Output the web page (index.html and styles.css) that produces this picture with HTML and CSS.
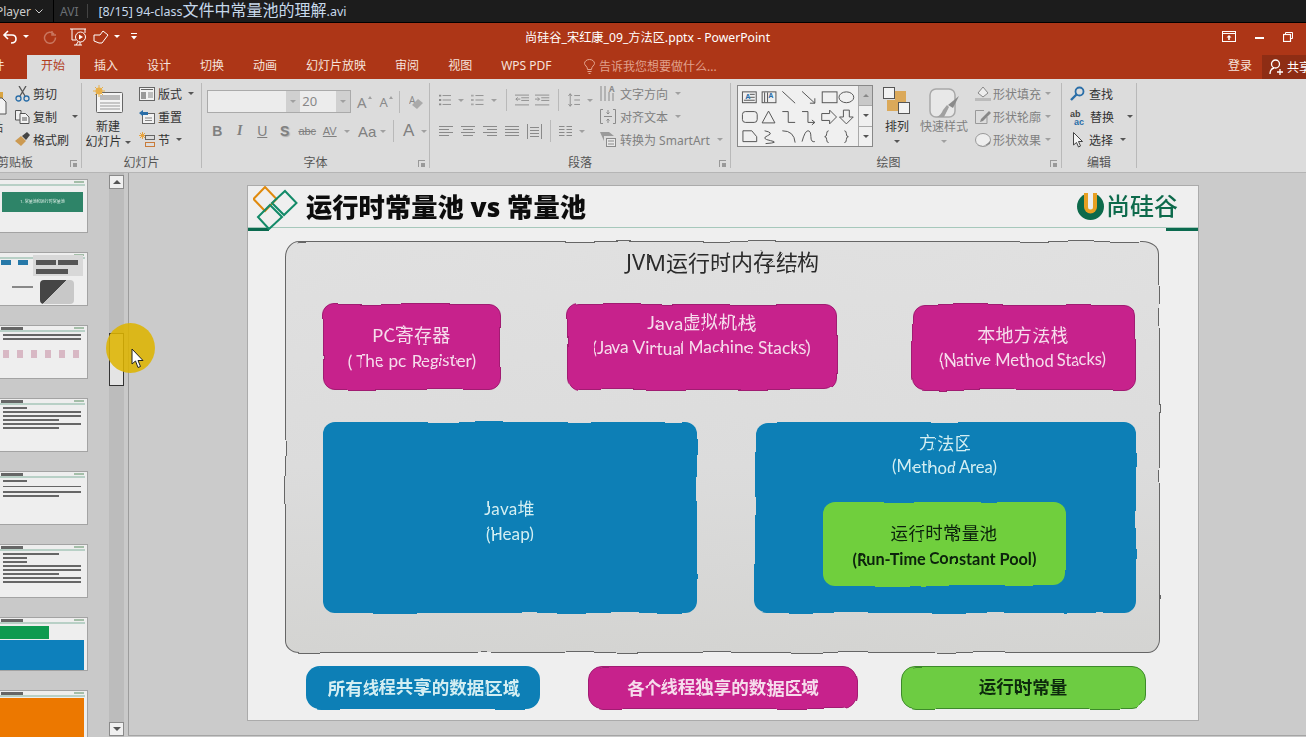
FILE: index.html
```html
<!DOCTYPE html>
<html lang="zh-CN">
<head>
    <meta charset="UTF-8">
    <title>尚硅谷_宋红康_09_方法区.pptx - PowerPoint</title>
    <link rel="stylesheet" href="styles.css">
</head>
<body>
    <!-- filter for the hand drawn edges on the slide -->
    <svg class="defs" width="0" height="0">
        <filter id="wobble" x="-3%" y="-3%" width="106%" height="106%">
            <feTurbulence type="fractalNoise" baseFrequency="0.022" numOctaves="1" seed="4"/>
            <feDisplacementMap in="SourceGraphic" scale="5"/>
            <feGaussianBlur stdDeviation="0.4"/>
        </filter>
        <filter id="soft"><feGaussianBlur stdDeviation="0.4"/></filter>
        <filter id="softer"><feGaussianBlur stdDeviation="0.55"/></filter>
    </svg>

    <div class="player-bar">
        <span class="player-name">Player</span>
        <svg class="player-chevron" width="8" height="5" viewBox="0 0 8 5"><path d="M0.5 0.5 4 4 7.5 0.5" fill="none" stroke="#ccc"/></svg>
        <span class="player-format">AVI</span>
        <span class="player-title">[8/15] 94-class<span class="player-cjk">文件中常量池的理解</span>.avi</span>
    </div>

    <div class="title-bar">
        <div class="quick-access">
            <svg class="qa-undo" width="15" height="14" viewBox="0 0 15 14"><path d="M6 1 2 5 6 9M2 5H10Q14 5 14 9T9 13" fill="none" stroke="#fff" stroke-width="1.6"/></svg>
            <span class="caret caret-white qa-caret"></span>
            <svg class="qa-redo" width="14" height="14" viewBox="0 0 14 14"><path d="M11 4A5.5 5.5 0 1 0 12.5 7.5M9 1V5H13" fill="none" stroke="#c9765f" stroke-width="1.5"/></svg>
            <svg class="qa-present" width="17" height="18" viewBox="0 0 17 18"><path d="M0 1H16M2 1V12H6M15 1V5" fill="none" stroke="#fff"/><circle cx="10.5" cy="9" r="5" fill="none" stroke="#fff"/><path d="M9 6.5 13 9 9 11.5Z" fill="#fff"/><path d="M8 14 6 17M10 14V17M4 17H12" stroke="#fff" fill="none"/></svg>
            <svg class="qa-touch" width="17" height="16" viewBox="0 0 17 16"><path d="M1 6H7L10 2 15 6 9 14H6L1 12Z" fill="none" stroke="#fff"/></svg>
            <span class="caret caret-white"></span>
            <svg class="qa-more" width="6" height="7" viewBox="0 0 6 7"><path d="M0 .5H6" stroke="#fff"/><path d="M0 3 3 6.5 6 3Z" fill="#fff"/></svg>
        </div>
        <div class="doc-title">尚硅谷_宋红康_09_方法区.pptx - PowerPoint</div>
        <div class="window-btns">
            <svg width="14" height="11" viewBox="0 0 14 11"><rect x=".5" y=".5" width="13" height="10" fill="none" stroke="#fff"/><path d="M.5 2.5H13.5" stroke="#fff"/><path d="M7 4 4.5 6.5H6.2V9H7.8V6.5H9.5Z" fill="#fff"/></svg>
            <svg width="9" height="9" viewBox="0 0 9 9"><path d="M0 6H9" stroke="#fff" stroke-width="2"/></svg>
            <svg width="10" height="10" viewBox="0 0 10 10"><path d="M2.5 2.5V.5H9.5V6.5H7.5" fill="none" stroke="#fff"/><rect x=".5" y="2.5" width="7" height="7" fill="none" stroke="#fff" stroke-width="1.2"/></svg>
        </div>
    </div>

    <div class="tab-bar">
        <span class="tab tab-file">文件</span>
        <span class="tab tab-active">开始</span>
        <span class="tab">插入</span>
        <span class="tab">设计</span>
        <span class="tab">切换</span>
        <span class="tab">动画</span>
        <span class="tab">幻灯片放映</span>
        <span class="tab">审阅</span>
        <span class="tab">视图</span>
        <span class="tab">WPS PDF</span>
        <span class="tell-me">
            <svg width="11" height="15" viewBox="0 0 11 15"><path d="M3.5 10.5Q3.5 8.500 2 7 .5 5.500 .5 4.500A5 4 0 0 1 10.500 4.500Q10.500 5.500 9 7 7.500 8.500 7.500 10.500ZM3.500 12.500H7.500M4.500 14.500H6.500" fill="none" stroke="#e3a48f"/></svg>
            告诉我您想要做什么...
        </span>
        <span class="login">登录</span>
        <span class="share">
            <svg width="15" height="16" viewBox="0 0 15 16"><circle cx="6.500" cy="5" r="4" fill="none" stroke="#fff" stroke-width="1.300"/><path d="M1 15Q1 10 5 9M11 10V16M8 13H14" fill="none" stroke="#fff" stroke-width="1.300"/></svg>
            共享
        </span>
    </div>

    <div class="ribbon">
        <!-- clipboard -->
        <div class="group group-clipboard">
            <div class="group-body">
                <div class="paste">
                    <svg width="7" height="24" viewBox="0 0 7 24"><path d="M0 0H3V6H0Z" fill="#d9a441"/><path d="M0 6H2L6 10V22H0" fill="#f3f3f3" stroke="#555"/></svg>
                    <span class="paste-label">粘贴</span>
                </div>
                <div class="stack stack-clipboard">
                    <div class="item"><svg width="15" height="16" viewBox="0 0 15 16"><path d="M4 0 10 10M11 0 5 10" stroke="#555" stroke-width="1.300"/><circle cx="3.500" cy="12.500" r="2.500" fill="none" stroke="#2a6ea8" stroke-width="1.300"/><circle cx="11.500" cy="12.500" r="2.500" fill="none" stroke="#2a6ea8" stroke-width="1.300"/></svg>剪切</div>
                    <div class="item"><svg width="15" height="14" viewBox="0 0 15 14"><path d="M.5 .5H6V10H.5Z" fill="#eee" stroke="#555"/><path d="M5 3.500H10.500L14 7V13.500H5Z" fill="#f4f4f4" stroke="#555"/><path d="M7 8H12M7 10H12" stroke="#555"/></svg>复制<span class="caret caret-copy"></span></div>
                    <div class="item"><svg width="15" height="15" viewBox="0 0 15 15"><path d="M0 9 6 4 11 9 6 14Z" fill="#cc9a52"/><path d="M7 4 12 0 15 3 11 8Z" fill="#444"/></svg>格式刷</div>
                </div>
            </div>
            <div class="group-label label-left">剪贴板</div>
            <span class="launcher"></span>
        </div>

        <!-- slides -->
        <div class="group group-slides">
            <div class="group-body">
                <div class="big-btn big-new">
                    <svg width="30" height="28" viewBox="0 0 30 28"><rect x="3.500" y="7.500" width="26" height="20" rx="1" fill="#f4f4f4" stroke="#666"/><rect x="7" y="10" width="20" height="5" fill="#bbb"/><path d="M7 18H27M7 21H27M7 24H27" stroke="#999"/><circle cx="6" cy="6" r="3.500" fill="#e8b04a"/><path d="M6 0V12M0 6H12M2 2 10 10M10 2 2 10" stroke="#e8b04a"/></svg>
                    <span class="big-text">新建<br>幻灯片<span class="caret caret-dark"></span></span>
                </div>
                <div class="stack stack-slides">
                    <div class="item"><svg width="16" height="14" viewBox="0 0 16 14"><rect x=".5" y=".5" width="15" height="13" fill="#f2f2f2" stroke="#666"/><path d="M2 2.500H14" stroke="#666"/><rect x="2" y="5" width="5" height="7" fill="#999"/><path d="M9 6H14M9 8H14M9 10H14" stroke="#888"/></svg>版式<span class="caret caret-dark"></span></div>
                    <div class="item"><svg width="16" height="14" viewBox="0 0 16 14"><rect x="3.500" y="3.500" width="12" height="10" fill="#f2f2f2" stroke="#666"/><path d="M0 3 4 0V2H9V5H4V6.500Z" fill="#2a6ea8"/><path d="M6 8H13M6 10.500H13" stroke="#888"/></svg>重置</div>
                    <div class="item"><svg width="16" height="15" viewBox="0 0 16 15"><path d="M3.500 0V7M0 3.500H7M1 1 6 6M6 1 1 6" stroke="#e8a33d"/><rect x="6.500" y="3.500" width="9" height="4" fill="none" stroke="#666"/><rect x="6.500" y="10.500" width="9" height="4" fill="none" stroke="#c87b3a"/></svg>节<span class="caret caret-dark"></span></div>
                </div>
            </div>
            <div class="group-label">幻灯片</div>
        </div>

        <!-- font -->
        <div class="group group-font">
            <div class="group-body column">
                <div class="font-row">
                    <div class="font-box">
                        <span class="font-input font-name"></span><span class="font-drop"><i class="caret caret-grey"></i></span>
                        <span class="font-input font-size">20</span><span class="font-drop"><i class="caret caret-grey"></i></span>
                    </div>
                    <span class="grow-a grow-big">A</span><span class="grow-mark"></span>
                    <span class="grow-a grow-small">A</span><span class="grow-mark"></span>
                    <span class="sep sep-font"></span>
                    <svg class="eraser" width="14" height="14" viewBox="0 0 14 14"><text x="0" y="9" font-size="10" fill="#8a8a8a">A</text><path d="M3 10 9 4 14 8 8 14Z" fill="#aaa"/></svg>
                </div>
                <div class="fmt-row">
                    <span class="fmt fmt-b">B</span>
                    <span class="fmt fmt-i">I</span>
                    <span class="fmt fmt-u">U</span>
                    <span class="fmt fmt-s">S</span>
                    <span class="fmt fmt-abc">abc</span>
                    <span class="fmt fmt-av">AV</span><span class="caret caret-grey"></span>
                    <span class="fmt fmt-aa">Aa</span><span class="caret caret-grey"></span>
                    <span class="sep sep-fmt"></span>
                    <span class="fmt fmt-a">A</span><span class="caret caret-grey"></span>
                </div>
            </div>
            <div class="group-label">字体</div>
            <span class="launcher"></span>
        </div>

        <!-- paragraph -->
        <div class="group group-para">
            <div class="group-body">
                <div class="para-left">
                    <div class="para-row para-row-top">
                        <svg class="bullets" width="14" height="14" viewBox="0 0 14 14"><path d="M4 2H14M4 7H14M4 12H14" stroke="#8a8a8a"/><path d="M0 1H2.500V3H0ZM0 6H2.500V8H0ZM0 11H2.500V13H0Z" fill="#8a8a8a"/></svg>
                        <span class="caret caret-grey para-caret"></span>
                        <svg class="numbers" width="14" height="14" viewBox="0 0 14 14"><path d="M5 2H14M5 7H14M5 12H14" stroke="#8a8a8a"/><path d="M0 1H3V3H0ZM0 6H3V8H0ZM0 11H3V13H0Z" fill="#a8a8a8"/></svg>
                        <span class="caret caret-grey para-caret"></span>
                        <span class="sep sep-para"></span>
                        <svg class="indent" width="16" height="12" viewBox="0 0 16 12"><path d="M0 .500H16M7 3.500H16M7 6.500H16M0 11.500H16M6 5H1M3 3 1 5 3 7" fill="none" stroke="#8a8a8a"/></svg>
                        <svg class="indent" width="16" height="12" viewBox="0 0 16 12"><path d="M0 .500H16M7 3.500H16M7 6.500H16M0 11.500H16M0 5H5M3 3 5 5 3 7" fill="none" stroke="#8a8a8a"/></svg>
                        <span class="sep sep-para"></span>
                        <svg class="spacing" width="14" height="16" viewBox="0 0 14 16"><path d="M7 3H14M7 8H14M7 13H14M2.500 1V15M0.500 3.500 2.500 1 4.500 3.500M0.500 12.500 2.500 15 4.500 12.500" fill="none" stroke="#8a8a8a"/></svg>
                        <span class="caret caret-grey para-caret"></span>
                    </div>
                    <div class="para-row">
                        <svg class="align" width="14" height="10" viewBox="0 0 14 10"><path d="M0 .500H14M0 3.500H10M0 6.500H14M0 9.500H10" stroke="#8a8a8a"/></svg>
                        <svg class="align" width="14" height="10" viewBox="0 0 14 10"><path d="M0 .500H14M2 3.500H12M0 6.500H14M2 9.500H12" stroke="#8a8a8a"/></svg>
                        <svg class="align" width="14" height="10" viewBox="0 0 14 10"><path d="M0 .500H14M4 3.500H14M0 6.500H14M4 9.500H14" stroke="#8a8a8a"/></svg>
                        <svg class="align" width="14" height="10" viewBox="0 0 14 10"><path d="M0 .500H14M0 3.500H14M0 6.500H14M0 9.500H14" stroke="#8a8a8a"/></svg>
                        <svg class="align align-last" width="15" height="15" viewBox="0 0 15 15"><path d="M.5 0V15M14.500 0V15M3 3.500H12M3 6.500H12M3 9.500H12M3 12.500H12" fill="none" stroke="#8a8a8a"/></svg>
                        <span class="sep sep-para"></span>
                        <svg class="cols" width="13" height="10" viewBox="0 0 13 10"><path d="M0 .500H5.500M7.500 .500H13M0 3.500H5.500M7.500 3.500H13M0 6.500H5.500M7.500 6.500H13M0 9.500H5.500M7.500 9.500H13" stroke="#8a8a8a"/></svg>
                        <span class="caret caret-grey para-caret"></span>
                    </div>
                </div>
                <div class="stack stack-para">
                    <div class="item item-off"><svg width="16" height="15" viewBox="0 0 16 15"><path d="M1 0V15M5 0V15M9 6V15" stroke="#8a8a8a"/><text x="9" y="6" font-size="8" font-weight="700" fill="#8a8a8a">A</text><path d="M13 7V15" stroke="#8a8a8a"/></svg>文字方向<span class="caret caret-grey"></span></div>
                    <div class="item item-off"><svg width="16" height="15" viewBox="0 0 16 15"><path d="M3 .500H.5V14.500H3M13 .500H15.500V14.500H13M4 7.500H12" fill="none" stroke="#8a8a8a"/><path d="M8 1V5M6.500 3.500 8 5 9.500 3.500M8 14V10M6.500 11.500 8 10 9.500 11.500" fill="none" stroke="#8a8a8a"/></svg>对齐文本<span class="caret caret-grey"></span></div>
                    <div class="item item-off"><svg width="16" height="15" viewBox="0 0 16 15"><path d="M0 0H9L14 4H4V9Z" fill="#9a9a9a"/><rect x="6.500" y="6.500" width="9" height="8" fill="#e8e8e8" stroke="#8a8a8a"/><path d="M8 9H14M8 12H14" stroke="#8a8a8a"/></svg>转换为 SmartArt<span class="caret caret-grey"></span></div>
                </div>
            </div>
            <div class="group-label">段落</div>
            <span class="launcher"></span>
        </div>

        <!-- drawing -->
        <div class="group group-draw">
            <div class="group-body">
                <div class="gallery">
                    <svg width="122" height="61" viewBox="0 0 122 61">
                        <g fill="none" stroke="#555">
                            <rect x="4.500" y="5.500" width="14" height="11"/>
                            <path d="M12 8H17M12 11H17M6 14H17"/>
                            <rect x="24.500" y="5.500" width="14" height="11"/>
                            <path d="M27 6V16M30 6V16"/>
                            <path d="M45 5 58 17M65 5 78 17M78 12V17H73"/>
                            <rect x="85.500" y="5.500" width="15" height="11"/>
                            <ellipse cx="110" cy="11" rx="7.500" ry="5.500"/>
                            <rect x="4.500" y="25.500" width="15" height="11" rx="3"/>
                            <path d="M31 25 24.500 37H37.500Z"/>
                            <path d="M45 25.500H51V36.500H58M65 25.500H71V36.500H78M75 34 78 36.500 75 39"/>
                            <path d="M85 27.500H93V24L100 31 93 38V34.500H85Z"/>
                            <path d="M107 24H113V31H117L110 38 103 31H107Z"/>
                            <path d="M5 45H14L19 51V56H5ZM27 45Q37 47 30 50T33 55 28 58M45 45Q57 45 58 57M65 56Q68 45 71 45T74 51 78 56"/>
                            <path d="M92 45Q90 45 90 48T88 51Q90 51 90 54T92 57M108 45Q110 45 110 48T112 51Q110 51 110 54T108 57"/>
                        </g>
                        <text x="7.500" y="13" font-size="7" font-weight="700" fill="#2a6ea8">A</text>
                        <text x="31" y="12" font-size="7" font-weight="700" fill="#2a6ea8">A</text>
                    </svg>
                    <div class="gallery-scroll">
                        <span class="scroll-up"><i class="caret caret-up"></i></span>
                        <span class="scroll-down"><i class="caret caret-dark"></i></span>
                        <span class="scroll-more"><i class="caret caret-dark"></i></span>
                    </div>
                </div>
                <div class="big-btn big-arrange">
                    <svg width="28" height="28" viewBox="0 0 28 28"><rect x="12" y="4" width="11" height="11" fill="#dba95a"/><rect x="4" y="13" width="11" height="11" fill="#dba95a"/><rect x=".5" y=".5" width="11" height="11" fill="#f2f2f2" stroke="#555"/><rect x="15.500" y="15.500" width="11" height="11" fill="#f2f2f2" stroke="#555"/></svg>
                    <span class="big-text">排列</span>
                    <span class="caret caret-dark big-caret"></span>
                </div>
                <div class="big-btn big-style">
                    <svg width="30" height="32" viewBox="0 0 30 32"><rect x="1" y="1" width="25" height="28" rx="6" fill="#e8e8e8" stroke="#a8a8a8" stroke-width="1.500"/><path d="M30 8 24 20 19 17Z" fill="#8a8a8a"/><path d="M20 19 15 29H8Q12 27 14 22L18 17Z" fill="#a0a0a0"/></svg>
                    <span class="big-text text-off">快速样式</span>
                    <span class="caret caret-grey big-caret"></span>
                </div>
                <div class="stack stack-draw">
                    <div class="item item-off"><svg width="17" height="15" viewBox="0 0 17 15"><path d="M3 7 8 1 13 7 8 11Z" fill="#eee" stroke="#888"/><rect y="12" width="16" height="3" fill="#bbb"/></svg>形状填充<span class="caret caret-grey"></span></div>
                    <div class="item item-off"><svg width="17" height="15" viewBox="0 0 17 15"><path d="M9 1.500H.5V14.500H12V8" fill="none" stroke="#999"/><path d="M6 10 14 2 16 4 8 12 5 13Z" fill="#888"/></svg>形状轮廓<span class="caret caret-grey"></span></div>
                    <div class="item item-off"><svg width="17" height="15" viewBox="0 0 17 15"><ellipse cx="8" cy="8" rx="7.500" ry="6.500" fill="#eee" stroke="#999"/><path d="M2 13Q9 16 15 9V12Q9 15 2 13Z" fill="#888"/></svg>形状效果<span class="caret caret-grey"></span></div>
                </div>
            </div>
            <div class="group-label label-draw">绘图</div>
            <span class="launcher"></span>
        </div>

        <!-- editing -->
        <div class="group group-edit">
            <div class="group-body">
                <div class="stack stack-edit">
                    <div class="item"><svg width="15" height="15" viewBox="0 0 15 15"><circle cx="9.500" cy="5.500" r="4" fill="none" stroke="#2a6ea8" stroke-width="1.800"/><path d="M6.500 8.500 1 14" stroke="#2a6ea8" stroke-width="2.400"/></svg>查找</div>
                    <div class="item"><svg width="16" height="16" viewBox="0 0 16 16"><text x="0" y="8" font-size="9" font-weight="700" fill="#444" font-family="Liberation Sans">ab</text><text x="4" y="16" font-size="9" font-weight="700" fill="#2a6ea8" font-family="Liberation Sans">ac</text></svg>替换<span class="caret caret-dark caret-replace"></span></div>
                    <div class="item"><svg width="15" height="16" viewBox="0 0 15 16"><path d="M3.500 .5V13L6.500 10.500 8.500 15 10.500 14 8.500 9.500H12.500Z" fill="#f4f4f4" stroke="#444"/></svg>选择<span class="caret caret-dark"></span></div>
                </div>
            </div>
            <div class="group-label">编辑</div>
        </div>
    </div>

    <div class="workspace">
        <div class="thumbs">
            <div class="thumb"><div class="thumb-logo"></div><div class="thumb-banner">1. 常量池和运行时常量池</div></div>
            <div class="thumb thumb-diagram"><div class="thumb-logo"></div>
                <div class="mini-left"><span class="mini-blue"></span><span class="mini-blue"></span></div>
                <div class="mini-right"><span class="mini-dark"></span><span class="mini-dark"></span><span class="mini-dark mini-wide"></span></div>
                <div class="mini-note"></div>
                <div class="mini-stack"></div>
            </div>
            <div class="thumb"><div class="thumb-logo"></div><div class="thumb-title"></div><div class="bar bar-long"></div><div class="bar bar-long"></div><div class="mini-flow"></div></div>
            <div class="thumb"><div class="thumb-logo"></div><div class="thumb-title"></div><div class="bar bar-short"></div><div class="bar bar-long"></div><div class="bar bar-long"></div><div class="bar bar-mid"></div><div class="bar bar-long"></div><div class="bar bar-mid"></div></div>
            <div class="thumb"><div class="thumb-logo"></div><div class="thumb-title"></div><div class="bar bar-short"></div><div class="bar bar-long bar-gap"></div><div class="bar bar-long bar-gap"></div><div class="bar bar-mid"></div></div>
            <div class="thumb"><div class="thumb-logo"></div><div class="thumb-title"></div><div class="bar bar-mid"></div><div class="bar bar-short"></div><div class="bar bar-short"></div><div class="bar bar-long"></div><div class="bar bar-long"></div><div class="bar bar-mid"></div><div class="bar bar-long"></div><div class="bar bar-long"></div></div>
            <div class="thumb"><div class="thumb-logo"></div><div class="thumb-title"></div><div class="mini-green"></div><div class="mini-code"></div></div>
            <div class="thumb"><div class="thumb-logo"></div><div class="thumb-title"></div><div class="mini-orange"></div></div>
        </div>

        <div class="thumb-scroll">
            <span class="thumb-arrow"><i class="arrow-up"></i></span>
            <span class="thumb-handle"></span>
            <span class="thumb-arrow thumb-arrow-down"><i class="arrow-down"></i></span>
        </div>

        <div class="canvas">
            <div class="slide">
                <div class="slide-head">
                    <svg class="slide-mark" width="46" height="44" viewBox="0 0 46 44">
                        <path d="M12 1 23.500 13 12 25 .5 13Z" fill="none" stroke="#e08a10" stroke-width="2"/>
                        <path d="M32 5 43.500 17 31 29 19 17Z" fill="none" stroke="#128a68" stroke-width="2"/>
                        <path d="M17 19 29 31 16 43 5 31Z" fill="none" stroke="#128a68" stroke-width="2"/>
                    </svg>
                    <h1 class="slide-title">运行时常量池 vs 常量池</h1>
                    <div class="brand">
                        <svg width="27" height="27" viewBox="0 0 27 27"><circle cx="13.500" cy="13.500" r="13.500" fill="#0d6a4c"/><path d="M7 0H20V14A6.500 6.500 0 0 1 7 14Z" fill="#e8a020"/><path d="M11 0H16V14A2.500 2.500 0 0 1 11 14Z" fill="#efefef"/></svg>
                        <span class="brand-name">尚硅谷</span>
                    </div>
                </div>
                <div class="head-rule"><span></span><span></span></div>

                <div class="memory">
                    <div class="memory-title">JVM运行时内存结构</div>
                    <div class="mem-row">
                        <div class="card card-pink card-pc">PC寄存器<span class="en">( The pc Register)</span></div>
                        <div class="card card-pink card-vm">Java虚拟机栈<span class="en">(Java Virtual Machine Stacks)</span></div>
                        <div class="card card-pink card-native">本地方法栈<span class="en">(Native Method Stacks)</span></div>
                    </div>
                    <div class="mem-row mem-row-low">
                        <div class="card card-blue card-heap">Java堆<span class="en">(Heap)</span></div>
                        <div class="card card-blue card-method">
                            <div class="method-text">方法区<span class="en">(Method Area)</span></div>
                            <div class="pool">运行时常量池<span class="en">(Run-Time Constant Pool)</span></div>
                        </div>
                    </div>
                </div>

                <div class="legend">
                    <div class="card card-blue legend-a">所有线程共享的数据区域</div>
                    <div class="card card-pink legend-b">各个线程独享的数据区域</div>
                    <div class="card card-green legend-c">运行时常量</div>
                </div>
            </div>
        </div>

        <!-- recording highlight and the mouse pointer -->
        <span class="pointer-glow"></span>
        <svg class="pointer" width="14" height="21" viewBox="0 0 14 21"><path d="M1 1V16L4.500 13 7 19.500 9.500 18.500 7 12.500H12Z" fill="#fff" stroke="#222"/></svg>
    </div>
</body>
</html>
```
FILE: styles.css
```css
* {
    box-sizing: border-box;
}
html, body {
    margin: 0;
    height: 737px;
    overflow: hidden;
}
body {
    position: relative;
    font-family: "Noto Sans", "Noto Sans CJK SC", sans-serif;
    font-size: 12px;
    background-color: #cbcbcb;
    color: #333;
}
.defs {
    position: absolute;
}

/* player bar */
.player-bar {
    height: 23px;
    display: flex;
    align-items: center;
    background-color: #1c1c1c;
    border-bottom: 1px solid #000;
    color: #ccc;
    overflow: hidden;
}
.player-name {
    width: 33px;
    margin-left: -4px;
    font-size: 12px;
    text-align: right;
}
.player-chevron {
    margin-left: 6px;
}
.player-format {
    margin-left: 10px;
    padding-left: 6px;
    border-left: 1px solid #000;
    line-height: 23px;
    color: #6a6f74;
    font-size: 12px;
}
.player-title {
    margin-left: 9px;
    padding-left: 10px;
    border-left: 1px solid #444;
    color: #c6d8ea;
    font-size: 12.500px;
    line-height: 13px;
}
.player-cjk {
    font-size: 16px;
}

/* title bar */
.title-bar {
    height: 27px;
    display: flex;
    align-items: center;
    background-color: #ad3617;
    color: #fff;
}
.quick-access {
    width: 525px;
    flex: none;
    display: flex;
    align-items: center;
    padding-left: 2px;
}
.qa-undo {
    margin-right: 6px;
}
.qa-caret {
    margin-right: 14px;
}
.qa-present {
    margin-left: 13px;
}
.qa-touch {
    margin: 0 4px 0 6px;
}
.qa-more {
    margin-left: 11px;
}
.doc-title {
    font-size: 12.200px;
    white-space: nowrap;
}
.window-btns {
    width: 84px;
    flex: none;
    display: flex;
    align-items: center;
    gap: 19px;
    margin-left: auto;
}

/* tabs */
.tab-bar {
    height: 29px;
    display: flex;
    align-items: flex-end;
    background-color: #ad3617;
    color: #f6e3dc;
    overflow: hidden;
}
.tab {
    height: 24px;
    line-height: 22px;
    padding: 0 14.500px;
    white-space: nowrap;
}
.tab-file {
    margin-left: -34px;
    padding-right: 22px;
}
.tab-active {
    background-color: #dcdcdc;
    color: #b23c1c;
}
.tell-me {
    height: 24px;
    display: flex;
    align-items: center;
    gap: 4px;
    margin-left: 18px;
    padding-bottom: 2px;
    color: #e0a08c;
}
.login {
    margin-left: auto;
    height: 24px;
    line-height: 22px;
    margin-right: 10px;
}
.share {
    width: 44px;
    height: 24px;
    display: flex;
    align-items: center;
    gap: 3px;
    padding-left: 7px;
    background-color: #8e2d14;
    color: #fff;
    white-space: nowrap;
    overflow: hidden;
}
.share svg {
    flex: none;
}

/* ribbon */
.ribbon {
    height: 94px;
    display: flex;
    align-items: flex-start;
    padding-top: 4px;
    background-color: #dcdcdc;
    border-bottom: 1px solid #b5b5b5;
}
.group {
    position: relative;
    height: 85px;
    flex: none;
    border-right: 1px solid #b9b9b9;
}
.group-body {
    height: 69px;
    display: flex;
}
.column {
    flex-direction: column;
}
.group-label {
    height: 16px;
    margin-top: 3px;
    line-height: 16px;
    text-align: center;
    color: #555;
}
.label-left {
    text-align: left;
    margin-left: -3px;
}
.label-draw {
    padding-right: 15px;
}
.launcher {
    position: absolute;
    right: 4px;
    bottom: 1px;
    width: 7px;
    height: 7px;
    border-left: 1px solid #999;
    border-top: 1px solid #999;
}
.launcher::after {
    content: "";
    position: absolute;
    right: 0;
    bottom: 0;
    width: 4px;
    height: 4px;
    background-color: #999;
}
.group-clipboard { width: 82px; }
.group-slides { width: 120px; }
.group-font { width: 228px; }
.group-para { width: 301px; }
.group-draw { width: 331px; }
.group-edit { width: 75px; }

.stack {
    display: flex;
    flex-direction: column;
    height: 69px;
    margin-top: -1px;
}
.item {
    height: 23px;
    display: flex;
    align-items: center;
    gap: 3px;
    white-space: nowrap;
}
.item svg {
    flex: none;
}
.item-off {
    color: #808080;
}
.caret {
    display: inline-block;
    flex: none;
    width: 0;
    height: 0;
    border-left: 3px solid transparent;
    border-right: 3px solid transparent;
    border-top: 3px solid #555;
}
.caret-white { border-top-color: #fff; }
.caret-dark { border-top-color: #555; }
.caret-grey { border-top-color: #a0a0a0; }
.caret-up {
    border-top: 0;
    border-bottom: 3px solid #888;
}
.item .caret {
    margin-left: 3px;
}
.item .caret-copy {
    margin-left: 12px;
}
.item .caret-replace {
    margin-left: 9px;
}

.paste {
    position: relative;
    width: 15px;
    padding-top: 9px;
}
.paste svg {
    display: block;
}
.paste-label {
    position: absolute;
    top: 35px;
    left: -21px;
}

.big-btn {
    display: flex;
    flex-direction: column;
    align-items: center;
}
.big-text {
    text-align: center;
    line-height: 15px;
}
.text-off {
    color: #808080;
}
.big-new {
    width: 48px;
    margin-left: 2px;
    padding-top: 2px;
}
.big-new .big-text {
    margin-top: 6px;
}
.big-new .caret {
    margin-left: 3px;
    vertical-align: middle;
}
.stack-slides {
    margin-left: 7px;
}

.font-row {
    display: flex;
    align-items: center;
    height: 23px;
    margin-top: 7px;
    padding-left: 5px;
}
.font-box {
    display: flex;
    height: 23px;
    width: 144px;
    border: 1px solid #aaa;
}
.font-input {
    display: block;
    background-color: #ececec;
    color: #888;
    font-size: 13px;
    line-height: 20px;
    padding-left: 2px;
}
.font-name {
    width: 79px;
}
.font-size {
    width: 36px;
}
.font-drop {
    width: 14px;
    display: flex;
    align-items: center;
    justify-content: center;
    background-color: #d0d0d0;
}
.grow-a {
    color: #8a8a8a;
    line-height: 20px;
}
.grow-big {
    margin-left: 6px;
    font-size: 15px;
}
.grow-small {
    margin-left: 8px;
    font-size: 13px;
}
.grow-mark {
    width: 0;
    height: 0;
    margin: -9px 0 0 1px;
    border-left: 2.500px solid transparent;
    border-right: 2.500px solid transparent;
    border-bottom: 3px solid #a0a0a0;
}
.sep {
    display: block;
    flex: none;
    width: 1px;
    height: 22px;
    background-color: #b9b9b9;
}
.sep-font {
    margin-left: 6px;
}
.eraser {
    margin-left: 9px;
}
.fmt-row {
    display: flex;
    align-items: center;
    height: 24px;
    margin-top: 6px;
    padding-left: 4px;
    color: #808080;
}
.fmt {
    width: 22.500px;
    flex: none;
    text-align: center;
    font-family: "Liberation Sans", sans-serif;
    font-size: 14px;
}
.fmt-b { font-weight: 700; }
.fmt-i { font-style: italic; font-family: "Liberation Serif", serif; font-weight: 700; }
.fmt-u { text-decoration: underline; }
.fmt-s { font-weight: 700; text-shadow: 1px 1px 1px #aaa; }
.fmt-abc { font-size: 11px; text-decoration: line-through; }
.fmt-av { font-size: 11px; text-decoration: underline; margin-right: 2px; }
.fmt-aa { margin-left: 6px; font-size: 15px; }
.fmt-a { margin-left: 4px; font-size: 17px; }
.fmt-row .caret { margin-left: 1px; }
.sep-fmt { margin-left: 7px; }

.para-left {
    width: 170px;
    padding-left: 9px;
}
.para-row {
    display: flex;
    align-items: center;
    height: 24px;
    margin-top: 7px;
}
.para-row-top {
    margin-top: 5px;
}
.para-caret {
    margin: 0 7px;
}
.sep-para {
    margin: 0 8px 0 2px;
}
.indent {
    margin-right: 6px;
}
.spacing {
    margin-left: 1px;
}
.align {
    margin-right: 8px;
}
.align-last {
    margin-right: 6px;
}
.stack-para .item {
    gap: 4px;
}
.gallery {
    display: flex;
    width: 136px;
    height: 62px;
    margin: 2px 0 0 6px;
    background-color: #f0f0f0;
    border: 1px solid #888;
}
.gallery-scroll {
    display: flex;
    flex-direction: column;
    width: 14px;
    border-left: 1px solid #aaa;
}
.gallery-scroll span {
    flex: 1;
    display: flex;
    align-items: center;
    justify-content: center;
    border-bottom: 1px solid #aaa;
}
.gallery-scroll .scroll-up {
    background-color: #c8c8c8;
}
.gallery-scroll .scroll-more {
    border-bottom: 0;
}
.big-arrange {
    width: 36px;
    margin-left: 6px;
    padding-top: 4px;
}
.big-arrange .big-text {
    margin-top: 4px;
}
.big-style {
    width: 52px;
    margin-left: 3px;
    padding-top: 5px;
}
.big-style .big-text {
    margin-top: -1px;
}
.big-caret {
    margin-top: 6px;
}
.stack-draw {
    margin-left: 5px;
}
.stack-draw .item {
    gap: 1px;
}
.stack-edit {
    margin-left: 8px;
}
.stack-edit .item {
    gap: 4px;
}

/* slide list */
.workspace {
    position: relative;
    height: 564px;
    display: flex;
    background-color: #c9c9c9;
    overflow: hidden;
}
.thumbs {
    width: 109px;
    flex: none;
    padding-top: 6px;
    overflow: hidden;
}
.thumb {
    position: relative;
    width: 96px;
    height: 54px;
    margin: 0 0 19px -8px;
    padding: 8px 6px 0 10px;
    background-color: #eee;
    border: 1px solid #a3a3a3;
    overflow: hidden;
    filter: url(#softer);
}
.thumb-logo {
    position: absolute;
    left: 2px;
    right: 2px;
    top: 4px;
    height: 1.500px;
    background-color: #b8d0c6;
}
.thumb-logo::after {
    content: "";
    position: absolute;
    right: 1px;
    top: -3px;
    width: 10px;
    height: 2px;
    background-color: #a4bea8;
}
.thumb-title {
    position: absolute;
    left: 8px;
    top: 1px;
    width: 22px;
    height: 2.500px;
    background-color: #666;
}
.thumb-banner {
    margin: 4px -2px 0 -1px;
    height: 20px;
    line-height: 19px;
    background-color: #2e8468;
    color: #e8f4ee;
    font-size: 4px;
    text-align: center;
}
.bar {
    height: 1.500px;
    margin-bottom: 2.500px;
    background-color: #666;
}
.bar-long { width: 78px; }
.bar-mid { width: 56px; }
.bar-short { width: 24px; }
.bar-gap { margin-top: 4px; }
.mini-flow {
    height: 8px;
    margin-top: 10px;
    background: repeating-linear-gradient(90deg, #d8b8c4 0 6px, #eee 6px 14px);
}
.mini-left {
    display: flex;
    gap: 7px;
    margin: -1px 0 0 -2px;
}
.mini-blue {
    width: 10px;
    height: 5px;
    background-color: #2878a8;
}
.mini-right {
    position: absolute;
    left: 40px;
    top: 2px;
    width: 50px;
    height: 21px;
    display: flex;
    flex-wrap: wrap;
    gap: 2px;
    padding: 5px 3px 0;
    background-color: #d8d8d8;
}
.mini-dark {
    width: 20px;
    height: 5px;
    background-color: #555;
}
.mini-wide {
    width: 32px;
}
.mini-note {
    position: absolute;
    left: 19px;
    top: 33px;
    width: 21px;
    height: 2px;
    background-color: #888;
}
.mini-stack {
    position: absolute;
    left: 47px;
    top: 27px;
    width: 34px;
    height: 24px;
    border-radius: 4px;
    background: linear-gradient(135deg, #444 0 45%, #c8c8c8 45%);
}
.mini-green {
    width: 56px;
    height: 13px;
    margin: 0 0 1px -10px;
    background-color: #0b9a50;
}
.mini-code {
    height: 30px;
    margin: 0 -3px 0 -10px;
    background-color: #0a80bc;
}
.mini-orange {
    height: 44px;
    margin: -1px -3px 0 -10px;
    background-color: #ec7800;
}

/* list scrollbar */
.thumb-scroll {
    position: relative;
    width: 15px;
    flex: none;
    background-color: #bcbcbc;
}
.thumb-arrow {
    position: absolute;
    left: 0;
    top: 2px;
    width: 15px;
    height: 14px;
    display: flex;
    align-items: center;
    justify-content: center;
    background-color: #f0f0f0;
    border: 1px solid #8a8a8a;
}
.thumb-arrow-down {
    top: auto;
    bottom: 1px;
}
.arrow-up {
    border-left: 4px solid transparent;
    border-right: 4px solid transparent;
    border-bottom: 4px solid #555;
}
.arrow-down {
    border-left: 4px solid transparent;
    border-right: 4px solid transparent;
    border-top: 4px solid #555;
}
.thumb-handle {
    position: absolute;
    left: 0;
    top: 160px;
    width: 15px;
    height: 53px;
    background-color: #e4e4e4;
    border: 1px solid #333;
}

/* slide canvas */
.canvas {
    flex: 1;
    margin-left: 4px;
    padding: 12px 0 0 118px;
    background-color: #cbcbcb;
    border-left: 1px solid #9c9c9c;
    border-bottom: 1px solid #a5a5a5;
    height: 563px;
}
.slide {
    width: 952px;
    height: 536px;
    background-color: #efefef;
    border: 1px solid #ababab;
}
.slide-head {
    height: 42px;
    display: flex;
    align-items: center;
    padding: 0 20px 0 5px;
    border-bottom: 1px solid #a6c8bb;
}
.slide-mark {
    flex: none;
    margin-top: 2px;
    filter: url(#soft);
}
.slide-title {
    margin: 0 0 0 7px;
    font-size: 26.300px;
    font-weight: 900;
    line-height: 42px;
    color: #111;
    filter: url(#soft);
}
.brand {
    display: flex;
    align-items: center;
    gap: 2px;
    margin-left: auto;
    margin-top: -1px;
    filter: url(#soft);
}
.brand-name {
    font-size: 24px;
    font-weight: 500;
    line-height: 26px;
    color: #0d6a4c;
}
.head-rule {
    display: flex;
    justify-content: space-between;
    height: 3px;
}
.head-rule span {
    width: 32px;
    background-color: #0b6a4f;
}
.head-rule span:first-child {
    width: 21px;
}

.memory {
    width: 875px;
    height: 412px;
    margin: 10px 0 0 37px;
    padding: 4px 0 0 36.500px;
    background: linear-gradient(180deg, #e0e0e0, #dcdcdc 55%, #d4d4d2);
    border: 1.500px solid #666;
    border-radius: 14px 18px 12px 14px / 16px 14px 14px 12px;
    filter: url(#wobble);
}
.memory-title {
    height: 30px;
    margin-left: -36.500px;
    text-align: center;
    font-size: 22px;
    line-height: 30px;
    color: #2c2c2c;
}
.mem-row {
    display: flex;
    margin-top: 28px;
}
.mem-row-low {
    margin-top: 32px;
}
.card {
    display: flex;
    flex-direction: column;
    align-items: center;
    justify-content: center;
    flex: none;
    text-align: center;
    font-family: "Lato", "Noto Sans CJK SC", sans-serif;
    font-size: 18px;
    line-height: 25px;
    letter-spacing: .3px;
}
.en {
    display: block;
    font-size: 17.200px;
    letter-spacing: 0;
}
.legend .card {
    filter: url(#wobble);
}
.card-pink {
    background-color: #c7248c;
    color: #f6dcec;
    border: 1px solid #a11a72;
    border-radius: 12px;
}
.card-blue {
    background-color: #087fb6;
    color: #d4eef2;
    border-radius: 12px;
}
.card-green {
    background-color: #6dcc42;
    color: #0c2a0c;
    border: 1px solid #3d8a2a;
    border-radius: 14px;
}
.card-pc {
    width: 178px;
    height: 86px;
    padding-top: 2px;
}
.card-vm {
    width: 270px;
    height: 86px;
    margin-left: 66px;
    padding-bottom: 24px;
}
.card-vm .en {
    font-size: 17.300px;
}
.card-native {
    width: 223px;
    height: 86px;
    margin-left: 75px;
    padding-top: 2px;
}
.card-native .en {
    font-size: 16.500px;
}
.card-heap {
    width: 374px;
    height: 191px;
    font-size: 17px;
    padding-top: 6px;
}
.card-method {
    width: 381px;
    height: 191px;
    margin-left: 58px;
    justify-content: flex-start;
    padding-top: 8px;
    font-size: 17px;
}
.method-text {
    height: 66px;
}
.method-text .en {
    font-size: 16.600px;
}
.pool {
    width: 243px;
    height: 84px;
    display: flex;
    flex-direction: column;
    justify-content: center;
    margin: 6px 0 0 -2px;
    padding-top: 3px;
    background-color: #6fcf3e;
    color: #0a200a;
    border-radius: 12px;
    font-size: 17.500px;
}
.pool .en {
    font-size: 16.300px;
    font-weight: 700;
}
.legend {
    display: flex;
    margin: 13px 0 0 58px;
}
.legend .card {
    height: 43px;
    font-size: 17.500px;
    font-weight: 700;
    letter-spacing: 0;
    border-radius: 14px;
}
.legend-a { width: 234px; }
.legend-b { width: 269px; margin-left: 48px; }
.legend-c { width: 245px; margin-left: 44px; }

/* recording highlight */
.pointer-glow {
    position: absolute;
    left: 106px;
    top: 150px;
    width: 49px;
    height: 50px;
    border-radius: 50%;
    background-color: rgba(222, 180, 0, .87);
}
.pointer {
    position: absolute;
    left: 131px;
    top: 175px;
}
```
